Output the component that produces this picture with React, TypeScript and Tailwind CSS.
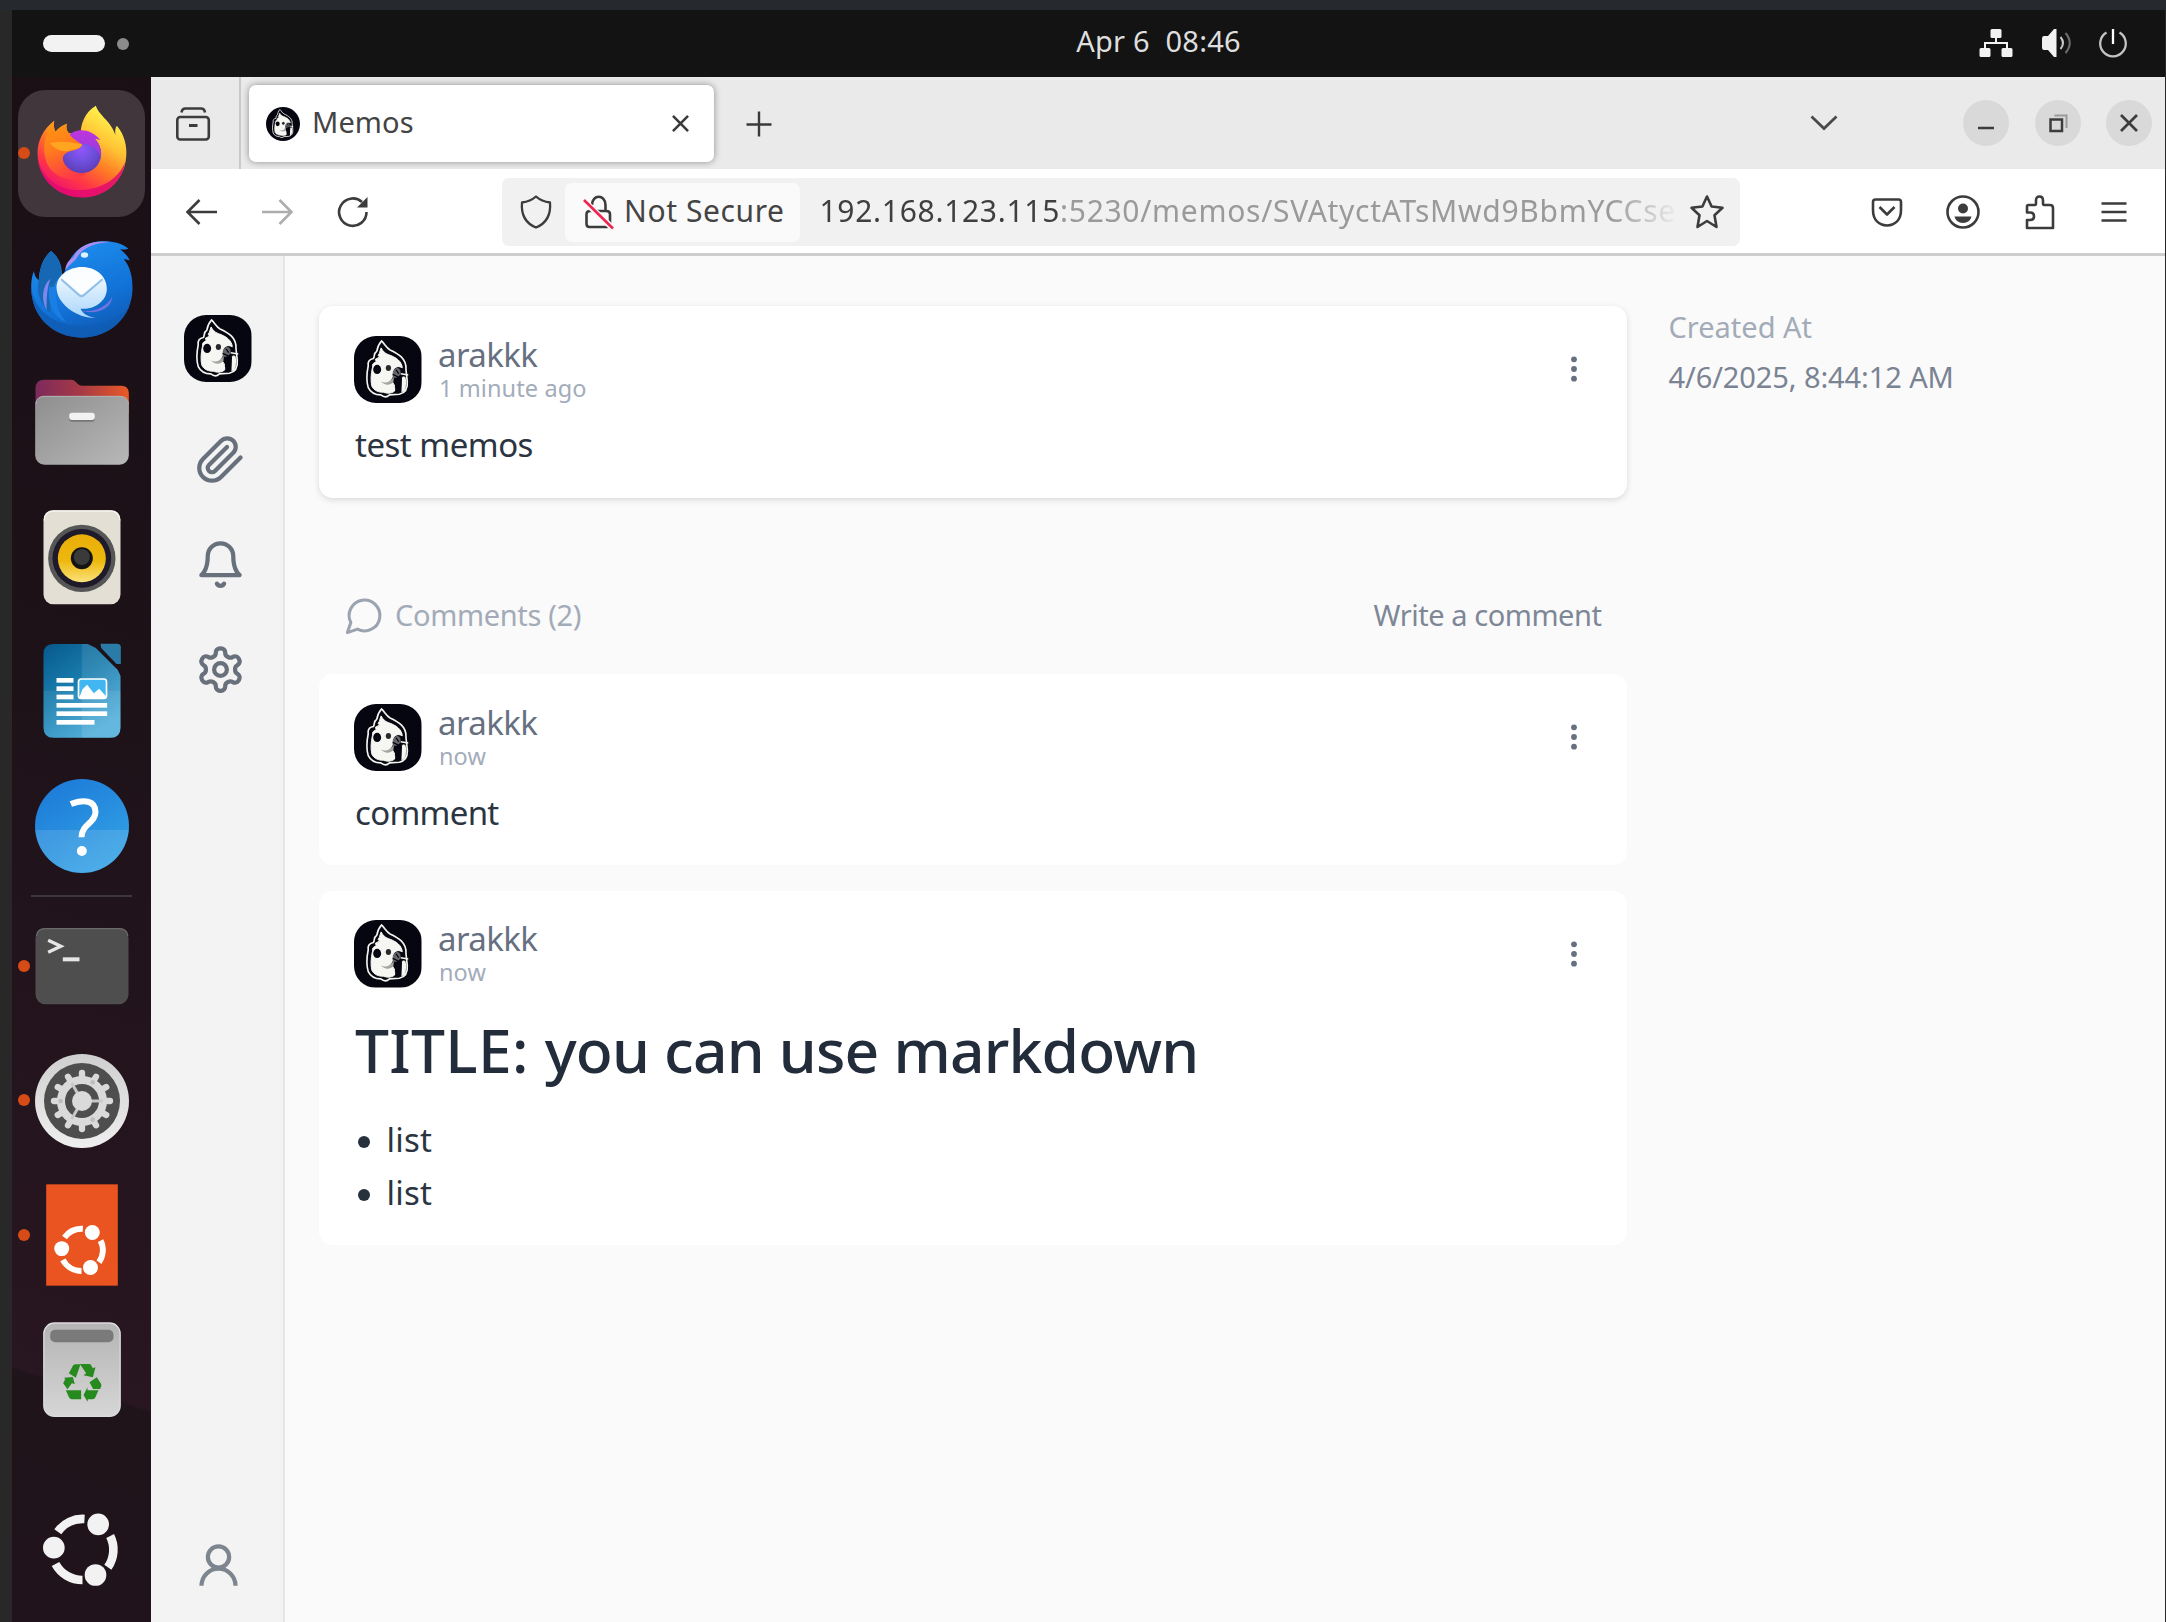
import type { ReactNode, SVGProps } from "react";

/* ---------- shared drawings ---------- */

function Avatar({ className }: { className: string }) {
  return (
    <svg className={className} viewBox="163 136 204 204">
      <rect x="163" y="136" width="204" height="204" fill="#060610" />
      <path
        d="M246 151 C236 163 233 174 232 182 C222 188 226 196 222 204 C210 206 204 214 206 226 C201 250 201 275 206 292 C214 308 228 314 244 314 C254 322 264 320 270 314 L300 312 C318 308 326 294 324 272 L322 256 L320 236 C322 205 298 190 272 178 C260 172 256 160 246 151Z"
        fill="#060610"
        stroke="#f4f4f0"
        strokeWidth="5"
        strokeLinejoin="round"
      />
      <path
        d="M245 172 C240 182 242 188 236 194 L240 200 L228 206 L230 214 C220 218 218 222 219 230 C214 252 213 272 217 288 C224 302 238 306 252 306 C268 312 280 308 288 300 C286 282 282 276 272 271 C282 262 278 250 282 238 C288 228 298 226 309 232 C307 212 290 200 266 192 C256 188 250 182 245 172Z"
        fill="#f6f6f2"
        stroke="#f6f6f2"
        strokeWidth="3"
        strokeLinejoin="round"
      />
      <path d="M244 272 C258 282 274 276 284 258 L282 276 C270 288 252 284 244 272Z" fill="#a5a5a3" />
      <path d="M308 262 C316 254 322 262 320 282 C319 298 314 306 306 305Z" fill="#f6f6f2" stroke="#f6f6f2" strokeWidth="2" />
      <path d="M286 270 L308 262 L306 306 L288 304Z" fill="#060610" />
      <ellipse cx="233" cy="237" rx="12" ry="14" fill="#060610" />
      <ellipse cx="267" cy="233" rx="8" ry="9" fill="#2a2a2e" />
      <path d="M284 238 C292 228 304 234 304 246 C302 258 292 264 282 262 C278 252 280 244 284 238Z" fill="#66666a" />
      <path d="M290 238 L298 250 M280 252 L298 260" stroke="#060610" strokeWidth="4" />
      <path d="M304 250 L327 254" stroke="#f4f4f0" strokeWidth="5" />
    </svg>
  );
}

function CircleOfFriends({ transform, color }: { transform?: string; color: string }) {
  return (
    <g transform={transform} fill={color}>
      <g fill="none" stroke={color} strokeWidth="26">
        <path d="M172 725 A92 92 0 0 1 252 687" />
        <path d="M329 738 A92 92 0 0 1 322 832" />
        <path d="M165 822 A92 92 0 0 0 246 870" />
      </g>
      <circle cx="160" cy="773" r="32.5" />
      <circle cx="293" cy="703" r="32.5" />
      <circle cx="285" cy="855" r="32.5" />
    </g>
  );
}

/* ---------- dock ---------- */

function DockItem({
  cy,
  running,
  active,
  children,
}: {
  cy: number;
  running?: boolean;
  active?: boolean;
  children: ReactNode;
}) {
  return (
    <div className="relative flex h-[134.5px] shrink-0 items-center justify-center">
      <div
        className={
          active
            ? "flex size-[127px] items-center justify-center rounded-[27px] bg-[#40363b]"
            : "flex size-[127px] items-center justify-center"
        }
      >
        <svg className="size-[108px]" viewBox={`82.5 ${cy - 162} 324 324`}>
          {children}
        </svg>
      </div>
      {running && <span className="absolute left-[6px] top-[61px] size-[12px] rounded-full bg-[#d64b16]" />}
    </div>
  );
}

function Firefox() {
  return (
    <>
      <defs>
        <linearGradient id="fxBody" x1="0.8" y1="0.1" x2="0.3" y2="0.95">
          <stop offset="0" stopColor="#fff14d" />
          <stop offset="0.3" stopColor="#ffc233" />
          <stop offset="0.55" stopColor="#ff7a24" />
          <stop offset="0.8" stopColor="#ff3647" />
          <stop offset="1" stopColor="#f0156b" />
        </linearGradient>
        <linearGradient id="fxFace" x1="0.2" y1="0" x2="0.5" y2="1">
          <stop offset="0" stopColor="#ff980e" />
          <stop offset="0.45" stopColor="#ff7d1c" />
          <stop offset="1" stopColor="#ff3b45" />
        </linearGradient>
        <radialGradient id="fxGlobe" cx="0.5" cy="0.4" r="0.65">
          <stop offset="0" stopColor="#9055fb" />
          <stop offset="0.5" stopColor="#6e4fdc" />
          <stop offset="1" stopColor="#5a3ab0" />
        </radialGradient>
        <linearGradient id="fxTop" x1="0" y1="0" x2="0" y2="1">
          <stop offset="0" stopColor="#c034dd" />
          <stop offset="1" stopColor="#8e3fe0" />
        </linearGradient>
      </defs>
      <path
        d="M240 175 C238 130 255 95 286 77 C296 108 330 120 345 165 C343 152 344 144 349 137 C372 163 380 200 377 230 C372 302 314 352 245 352 C170 352 111 294 111 219 C111 180 130 146 161 122 C159 138 161 148 165 155 C174 144 185 136 199 131 C196 142 198 152 205 160 C216 160 230 168 240 175Z"
        fill="url(#fxBody)"
      />
      <path
        d="M112 236 C128 300 180 334 246 330 C310 326 356 292 374 246 C364 312 308 352 245 352 C176 352 118 304 112 236Z"
        fill="#e30b72"
        opacity="0.85"
      />
      <circle cx="243" cy="221" r="59" fill="url(#fxGlobe)" />
      <path
        d="M200 172 C222 142 268 142 300 180 L284 176 C296 190 304 208 301 232 C290 200 262 190 240 192Z"
        fill="url(#fxTop)"
      />
      <path
        d="M161 122 C159 138 161 148 165 155 C174 144 185 136 199 131 C196 142 198 152 205 160 C214 176 232 184 245 194 C240 208 222 210 208 214 C192 220 184 228 188 244 C196 272 222 284 258 280 C230 310 170 300 146 262 C128 230 120 180 161 122Z"
        fill="url(#fxFace)"
      />
      <path d="M148 190 C170 182 206 184 245 193 C240 208 222 208 206 212 C186 218 164 208 148 190Z" fill="#ffa51f" />
    </>
  );
}

function Thunderbird() {
  return (
    <>
      <defs>
        <linearGradient id="tbBody" x1="0.3" y1="0" x2="0.7" y2="1">
          <stop offset="0" stopColor="#1e8ff0" />
          <stop offset="0.6" stopColor="#1272d8" />
          <stop offset="1" stopColor="#0f58b0" />
        </linearGradient>
        <linearGradient id="tbMail" x1="0" y1="0" x2="0" y2="1">
          <stop offset="0" stopColor="#ffffff" />
          <stop offset="1" stopColor="#a9d6fb" />
        </linearGradient>
      </defs>
      <path
        d="M100 574 C103 590 108 596 115 600 C117 562 130 530 152 513 C176 532 186 560 184 590 L200 560 C214 510 262 480 316 484 C344 485 366 492 384 506 C374 509 366 509 358 508 C372 518 382 528 388 542 C382 540 376 538 370 538 C390 562 396 592 396 625 C396 710 328 773 244 773 C158 773 92 710 92 622 C92 602 95 586 100 574Z"
        fill="url(#tbBody)"
      />
      <path d="M115 600 C117 562 130 530 152 513 C176 532 184 560 182 590 C160 600 148 640 150 700 C120 670 106 640 115 600Z" fill="#1668b4" />
      <path d="M92 622 C100 690 160 738 244 738 C310 738 360 716 388 676 C366 734 310 773 244 773 C158 773 92 710 92 622Z" fill="#0f5cb4" opacity="0.8" />
      <path d="M150 596 C124 616 122 660 138 690 C138 650 140 622 150 596Z" fill="#7f87ee" />
      <path d="M146 620 C140 670 160 710 196 726 C176 700 160 670 170 620Z" fill="#1a7fe4" />
      <path d="M194 572 C196 550 206 540 218 532 C232 498 276 478 330 486 C284 488 250 502 232 528 C226 544 208 550 194 572Z" fill="#a98df0" />
      <path d="M232 690 C276 700 316 684 336 650 C330 692 282 706 232 690Z" fill="#6f74e0" />
      <path
        d="M244 561 C286 561 319 588 319 626 C319 664 280 690 240 686 C246 700 262 710 286 714 C230 716 168 672 168 622 C168 588 204 561 244 561Z"
        fill="url(#tbMail)"
      />
      <path d="M182 598 L236 646 Q243 652 250 646 L306 598" fill="none" stroke="#8fbfe8" strokeWidth="6" />
      <path d="M184 594 L236 640 Q243 646 250 640 L304 594 C290 574 268 563 244 563 C220 563 198 574 184 594Z" fill="#fbfdff" />
      <ellipse cx="252" cy="525" rx="11" ry="8" fill="#dff0ff" />
    </>
  );
}

function Files() {
  return (
    <>
      <defs>
        <linearGradient id="flBack" x1="0" y1="0" x2="1" y2="0">
          <stop offset="0" stopColor="#7c2a5c" />
          <stop offset="0.5" stopColor="#a83a45" />
          <stop offset="1" stopColor="#e95a26" />
        </linearGradient>
        <linearGradient id="flFront" x1="0" y1="0" x2="1" y2="1">
          <stop offset="0" stopColor="#8e8e8e" />
          <stop offset="1" stopColor="#b8b8b8" />
        </linearGradient>
      </defs>
      <path d="M105 1000 V925 Q105 899 131 899 H212 Q220 899 226 906 L233 913 Q237 917 244 917 H362 Q385 917 385 940 V1000Z" fill="url(#flBack)" />
      <rect x="104" y="948" width="281" height="206" rx="28" fill="url(#flFront)" />
      <path d="M106 972 Q108 949 132 949 H358 Q382 949 384 972" fill="none" stroke="#b4b4b4" strokeWidth="3" />
      <rect x="206" y="1002" width="77" height="23" rx="9" fill="#777" />
      <rect x="206" y="998" width="77" height="22" rx="9" fill="#f2f2f2" />
    </>
  );
}

function Rhythmbox() {
  return (
    <>
      <defs>
        <linearGradient id="rbCone" x1="0" y1="0" x2="0" y2="1">
          <stop offset="0" stopColor="#e9ae08" />
          <stop offset="0.55" stopColor="#edb80e" />
          <stop offset="1" stopColor="#fbe27a" />
        </linearGradient>
      </defs>
      <rect x="129" y="88" width="231" height="282" rx="30" fill="#e3dfd4" />
      <path d="M131 118 Q132 90 160 90 H330 Q357 90 358 118" fill="none" stroke="#f6f4ee" strokeWidth="4" />
      <circle cx="244" cy="232" r="101" fill="#565656" />
      <circle cx="244" cy="232" r="88" fill="#1e1a2a" />
      <circle cx="244" cy="232" r="72" fill="url(#rbCone)" />
      <circle cx="244" cy="232" r="33" fill="#141414" />
      <circle cx="244" cy="228" r="24" fill="#3a3a3a" />
    </>
  );
}

function Writer() {
  return (
    <>
      <defs>
        <linearGradient id="wrBody" x1="0" y1="0" x2="0.6" y2="1">
          <stop offset="0" stopColor="#07598c" />
          <stop offset="0.5" stopColor="#1a7eae" />
          <stop offset="1" stopColor="#45a9d8" />
        </linearGradient>
      </defs>
      <path d="M159 492 H262 L286 504 L352 570 L360 588 V743 Q360 773 330 773 H159 Q129 773 129 743 V522 Q129 492 159 492Z" fill="url(#wrBody)" />
      <path d="M244 492 H262 L286 504 L352 570 L360 588 V743 Q360 773 330 773 H244Z" fill="#fff" opacity="0.1" />
      <path d="M129 632 H360 V743 Q360 773 330 773 H159 Q129 773 129 743Z" fill="#fff" opacity="0.08" />
      <path d="M300 491 H350 Q361 491 361 502 V552 H348 L302 504Z" fill="#2a7ba8" />
      <g fill="#fff">
        <rect x="168" y="594" width="51" height="14" />
        <rect x="168" y="619" width="51" height="14" />
        <rect x="168" y="644" width="51" height="14" />
        <rect x="168" y="669" width="152" height="14" />
        <rect x="168" y="694" width="152" height="14" />
        <rect x="168" y="720" width="114" height="14" />
      </g>
      <rect x="234" y="597" width="84" height="58" rx="8" fill="#42b6f0" stroke="#fff" strokeWidth="5" />
      <path d="M236 654 L246 628 L260 614 L280 640 L296 626 L316 648 V654Z" fill="#fff" />
    </>
  );
}

function Help() {
  return (
    <>
      <defs>
        <linearGradient id="hpTop" x1="0.2" y1="0" x2="0.8" y2="1">
          <stop offset="0" stopColor="#1c7ad8" />
          <stop offset="1" stopColor="#35a5e6" />
        </linearGradient>
      </defs>
      <circle cx="244.5" cy="1036" r="141" fill="url(#hpTop)" />
      <path d="M104 1048 H385 A141 141 0 0 1 104 1048Z" fill="#fff" opacity="0.12" />
      <path d="M211 970 C250 954 285 960 285 994 C285 1028 243 1030 243 1070" fill="none" stroke="#fff" strokeWidth="18" />
      <circle cx="244" cy="1111" r="15" fill="#fff" />
    </>
  );
}

function Terminal() {
  return (
    <>
      <rect x="105" y="144" width="279" height="229" rx="30" fill="#4e4e4e" />
      <path d="M108 168 Q110 146 134 146 H356 Q380 146 382 168" fill="none" stroke="#6a6a6a" strokeWidth="4" />
      <path d="M143 181 L181 199 L143 217" fill="none" stroke="#e6e6e6" strokeWidth="10" />
      <rect x="187" y="232" width="50" height="12" fill="#e6e6e6" />
    </>
  );
}

const TEETH = [0, 30, 60, 90, 120, 150, 180, 210, 240, 270, 300, 330];

function SettingsApp() {
  return (
    <>
      <defs>
        <linearGradient id="stRim" x1="0" y1="0" x2="0" y2="1">
          <stop offset="0" stopColor="#cfcfcf" />
          <stop offset="1" stopColor="#efefef" />
        </linearGradient>
      </defs>
      <circle cx="244.5" cy="662" r="141" fill="url(#stRim)" />
      <circle cx="244.5" cy="662" r="114" fill="#4e4e4e" />
      <g transform="translate(244.5 662)" stroke="#dadada" fill="none">
        {TEETH.map((a) => (
          <path key={a} d="M64 0 H84" strokeWidth="19" strokeLinecap="round" transform={`rotate(${a})`} />
        ))}
        <circle r="63" strokeWidth="24" />
        <g strokeWidth="9" stroke="#c8c8c8">
          <path d="M20 0 H62" />
          <path d="M20 0 H62" transform="rotate(120)" />
          <path d="M20 0 H62" transform="rotate(240)" />
        </g>
        <circle r="30" fill="#dadada" stroke="none" />
        <g fill="#bdbdbd" stroke="none">
          <circle cx="-64" r="7" />
          <circle cx="32" cy="-56" r="7" />
          <circle cx="32" cy="56" r="7" />
        </g>
      </g>
    </>
  );
}

function Trash() {
  return (
    <>
      <defs>
        <linearGradient id="trBody" x1="0" y1="0" x2="0" y2="1">
          <stop offset="0" stopColor="#b4b4b4" />
          <stop offset="1" stopColor="#d6d6d6" />
        </linearGradient>
      </defs>
      <rect x="130" y="99" width="229" height="280" rx="32" fill="url(#trBody)" stroke="#dcdcdc" strokeWidth="4" />
      <rect x="149" y="119" width="190" height="38" rx="15" fill="#7a7a7a" />
      <g fill="#278a1e">
        <path d="M205 250 L218 226 Q221 223 226 223 H240 L226 263Z" />
        <path d="M238 222 H266 Q270 222 272 226 L277 235 L285 232 L277 262 L249 256 L257 250Z" />
        <path d="M191 263 L217 261 L223 282 L214 280 L201 298 L188 280 L194 268Z" />
        <path d="M196 301 H242 V328 H214 Q208 328 205 321Z" />
        <path d="M249 315 L261 292 V301 H294 L284 323 Q281 328 275 328 H262 L261 335Z" />
        <path d="M267 277 L289 262 L302 282 Q305 289 299 297 H278Z" />
      </g>
    </>
  );
}

function Dock() {
  return (
    <nav className="flex w-[139px] shrink-0 flex-col bg-[linear-gradient(197.5deg,#190f15_0%,#1e1219_40%,#281620_83.9%,#20141b_84.1%,#20131b_100%)] pt-[8.75px]">
      <DockItem cy={219} running active>
        <Firefox />
      </DockItem>
      <DockItem cy={624}>
        <Thunderbird />
      </DockItem>
      <DockItem cy={1026}>
        <Files />
      </DockItem>
      <DockItem cy={228}>
        <Rhythmbox />
      </DockItem>
      <DockItem cy={633}>
        <Writer />
      </DockItem>
      <DockItem cy={1036}>
        <Help />
      </DockItem>
      <div className="flex h-[6px] shrink-0 items-center justify-center">
        <div className="h-[2px] w-[101px] bg-[#3d373b]" />
      </div>
      <DockItem cy={258} running>
        <Terminal />
      </DockItem>
      <DockItem cy={662} running>
        <SettingsApp />
      </DockItem>
      <DockItem cy={1065} running>
        <rect x="137" y="913" width="215" height="304" fill="#e95420" />
        <CircleOfFriends color="#fff" transform="translate(243 1110) scale(0.69) translate(-246 -779)" />
      </DockItem>
      <DockItem cy={240}>
        <Trash />
      </DockItem>
      <div className="mt-auto pb-[5px]">
        <DockItem cy={780}>
          <CircleOfFriends color="#f2f2f2" />
        </DockItem>
      </div>
    </nav>
  );
}

/* ---------- desktop top bar ---------- */

function TopBar() {
  return (
    <header className="grid h-[67px] shrink-0 grid-cols-[1fr_auto_1fr] items-center bg-[#131313]">
      <div className="flex items-center gap-[12px] pl-[31px]">
        <span className="h-[17px] w-[62px] rounded-full bg-[#f2f2f2]" />
        <span className="size-[12px] rounded-full bg-[#8b8b8b]" />
      </div>
      <div className="-mt-[6px] ml-[140px] whitespace-pre text-[29px] leading-none tracking-[0.25px] text-[#dedede]">Apr 6  08:46</div>
      <div className="-mt-px flex items-center justify-end pr-[37px] text-[#f2f2f2]">
        <svg className="h-[30px] w-[34px]" viewBox="0 0 34 30" fill="currentColor">
          <rect x="11.5" y="1" width="11" height="9" rx="1.5" />
          <rect x="0.5" y="20" width="11" height="9" rx="1.5" />
          <rect x="22.5" y="20" width="11" height="9" rx="1.5" />
          <path d="M17 8 V15 M6 22 V15 H28 V22" fill="none" stroke="currentColor" strokeWidth="2" />
        </svg>
        <svg className="ml-[28px] h-[30px] w-[32px]" viewBox="0 0 32 30" fill="currentColor">
          <path d="M1 11 Q1 8 3 8 H7 L13 1 H15.500 V29 H13 L7 22 H3 Q1 22 1 19Z" />
          <path d="M19.500 9 Q24.500 15 19.500 21" fill="none" stroke="#c8c8c8" strokeWidth="2" />
          <path d="M24.500 5 Q33 15 24.500 25" fill="none" stroke="#6e6e6e" strokeWidth="2" />
        </svg>
        <svg className="ml-[25px] h-[30px] w-[30px]" viewBox="0 0 30 30" fill="none" stroke="#c4c4c4" strokeWidth="2.3">
          <path d="M15 1 V16" stroke="#fff" />
          <path d="M8.500 4.500 A12.800 12.800 0 1 0 21.500 4.500" />
        </svg>
      </div>
    </header>
  );
}

/* ---------- browser ---------- */

function Glyph(props: SVGProps<SVGSVGElement>) {
  return <svg viewBox="0 0 36 36" fill="none" stroke="#3c3c3c" strokeWidth="2.6" {...props} />;
}

function TabStrip() {
  return (
    <div className="flex h-[92px] shrink-0 bg-[#eaeaea]">
      <div className="flex w-[90px] items-center border-r-2 border-[#c9c9c9] pl-[24px]">
        <Glyph className="size-[36px]" strokeLinejoin="round">
          <rect x="2.300" y="12" width="31.500" height="22.500" rx="3" />
          <path d="M6.500 7.500 Q7 3.500 10.500 3.500 H26 Q29.500 3.500 30 7.500" />
          <path d="M14 20.500 H22.500" strokeWidth="3" />
        </Glyph>
      </div>
      <div className="ml-[8px] mt-[8px] flex h-[77px] w-[465px] items-center rounded-[7px] bg-white pl-[17px] pr-[25px] shadow-[0_0_7px_rgba(0,0,0,0.4)]">
        <Avatar className="size-[34px] rounded-full" />
        <span className="relative -top-[2px] ml-[12px] text-[29px] leading-none tracking-[0.1px] text-[#444]">Memos</span>
        <svg className="ml-auto size-[17px]" viewBox="0 0 18 18" stroke="#3a3a3a" strokeWidth="2.700">
          <path d="M1 1 L17 17 M17 1 L1 17" />
        </svg>
      </div>
      <div className="flex flex-1 items-center pr-[13px]">
        <svg className="ml-[32px] mt-[2px] size-[26px]" viewBox="0 0 26 26" stroke="#3a3a3a" strokeWidth="2.400">
          <path d="M13 0.500 V25.500 M0.500 13.500 H25.500" />
        </svg>
        <svg className="ml-auto h-[16px] w-[28px]" viewBox="0 0 28 16" fill="none" stroke="#4a4a4a" strokeWidth="2.800">
          <path d="M1.500 1.500 L14 13.500 L26.500 1.500" />
        </svg>
        <div className="ml-[125px] flex gap-[25.500px]">
          <WindowButton>
            <path d="M15 28 H31" strokeWidth="2.500" />
          </WindowButton>
          <WindowButton>
            <path d="M19.500 15.500 H31.500 V28" stroke="#9a9a9a" strokeWidth="2" />
            <rect x="15.500" y="19.500" width="11.500" height="11.500" strokeWidth="2.500" />
          </WindowButton>
          <WindowButton>
            <path d="M15 15 L31 31 M31 15 L15 31" strokeWidth="2.700" />
          </WindowButton>
        </div>
      </div>
    </div>
  );
}

function WindowButton({ children }: { children: ReactNode }) {
  return (
    <svg className="size-[46px] rounded-full bg-[#d9d9d9]" viewBox="0 0 46 46" fill="none" stroke="#3c3c3c">
      {children}
    </svg>
  );
}

function Toolbar() {
  return (
    <div className="flex h-[87px] shrink-0 items-center border-b-[3px] border-[#cecece] bg-white pt-[2px]">
      <Glyph className="ml-[33px] size-[36px]">
        <path d="M33 18 H4 M15.500 6 L3.500 18 L15.500 30" />
      </Glyph>
      <Glyph className="ml-[39px] size-[36px]" stroke="#adadad">
        <path d="M3 18 H32 M20.500 6 L32.500 18 L20.500 30" />
      </Glyph>
      <Glyph className="ml-[40px] size-[36px]">
        <path d="M31.500 18 A13.700 13.700 0 1 1 27 8" />
        <path d="M32.500 3 V13.500 H22Z" fill="#3c3c3c" stroke="none" />
      </Glyph>
      <div className="ml-[131px] flex h-[67.5px] w-[1238px] items-center rounded-[7px] bg-[#f1f1f1]">
        <Glyph className="ml-[16px] size-[36px]" strokeWidth="2.300" strokeLinejoin="round">
          <path d="M18 2.500 C22 6 28 8 32 8.500 C33 20 29 29 18 33.500 C7 29 3 20 4 8.500 C8 8 14 6 18 2.500Z" />
        </Glyph>
        <div className="ml-[11px] flex h-[59px] w-[235px] items-center rounded-[7px] bg-[#fafafa] pl-[17px]">
          <Glyph className="size-[36px]" strokeLinejoin="round">
            <path d="M4.500 20 Q4.500 17 8 17 H24 Q28 17 28 20 V30 Q28 33 25 33 H7.500 Q4.500 33 4.500 30Z" />
            <path d="M10 11 C10 0 23.500 0 23.500 11 V17" />
            <path d="M1 6 L31 34.500" stroke="#fafafa" strokeWidth="6" />
            <path d="M2 6 L31 34.500" stroke="#f0254f" strokeWidth="2.600" />
          </Glyph>
          <span className="relative -top-px ml-[6px] whitespace-nowrap text-[30px] leading-none tracking-[0.6px] text-[#444]">Not Secure</span>
        </div>
        <div className="relative -top-px ml-[19.5px] w-[860px] overflow-hidden whitespace-nowrap py-1 text-[30px] leading-[40px] tracking-[0.7px] text-[#9a9a9a] [mask-image:linear-gradient(to_right,black_92%,transparent_100%)]">
          <span className="text-[#3f3f3f]">192.168.123.115</span>:5230/memos/SVAtyctATsMwd9BbmYCCse
        </div>
        <Glyph className="ml-[9px] size-[36px] shrink-0" strokeLinejoin="round">
          <path d="M18 2.500 L22.600 12.500 L33.500 13.800 L25.500 21.300 L27.500 33 L18 27 L8.500 33 L10.500 21.300 L2.500 13.800 L13.400 12.500Z" />
        </Glyph>
      </div>
      <Glyph className="ml-[129px] size-[36px]" strokeLinejoin="round">
        <path d="M4 8 Q4 5.500 6.500 5.500 H29.500 Q32 5.500 32 8 V16 C32 26 26 31 18 31.500 C10 31 4 26 4 16Z" />
        <path d="M10.500 13 L18 20.500 L25.500 13" />
      </Glyph>
      <Glyph className="ml-[40px] size-[36px]">
        <circle cx="18" cy="18" r="15.500" />
        <circle cx="18" cy="14.500" r="5" fill="#3c3c3c" stroke="none" />
        <path d="M9.500 22.500 H26.500 Q25 29 18 29 Q11 29 9.500 22.500Z" fill="#3c3c3c" stroke="none" />
      </Glyph>
      <Glyph className="ml-[41px] size-[36px]" strokeLinejoin="round">
        <path d="M5 34 V26 H8 Q12 26 12 22.300 Q12 18.500 8 18.500 H5 V12.500 Q5 11 6.500 11 H13 Q14 11 14 9 V6.500 Q14 2.500 17.500 2.500 Q21 2.500 21 6.500 V9 Q21 11 22 11 H28 Q31 11 31 14 V34Z" />
      </Glyph>
      <Glyph className="ml-[38px] size-[36px]">
        <path d="M5.500 9.500 H30.500 M5.500 18 H30.500 M5.500 26.500 H30.500" />
      </Glyph>
    </div>
  );
}

/* ---------- memos page ---------- */

function LineIcon({ className, children, strokeWidth = 2 }: { className: string; children: ReactNode; strokeWidth?: number }) {
  return (
    <svg className={className} viewBox="0 0 24 24" fill="none" stroke="currentColor" strokeWidth={strokeWidth} strokeLinejoin="round" strokeLinecap="butt">
      {children}
    </svg>
  );
}

function SideNav() {
  return (
    <aside className="flex w-[134px] shrink-0 flex-col items-center border-r-2 border-[#e4e5e9] bg-[#f3f3f3] pb-[31.500px] pl-[2px] pt-[58.500px] text-[#68707c]">
      <Avatar className="h-[67.500px] w-[67.500px] rounded-[22px]" />
      <div className="ml-[4px] mt-[52px] flex flex-col gap-[54px]">
        <LineIcon className="size-[51px]">
          <path strokeLinecap="round" d="m21.440 11.050-9.190 9.190a6 6 0 0 1-8.490-8.490l8.570-8.570A4 4 0 1 1 18 8.840l-8.590 8.570a2 2 0 0 1-2.830-2.830l8.490-8.480" />
        </LineIcon>
        <LineIcon className="size-[51px]">
          <path strokeLinecap="round" d="M6 8a6 6 0 0 1 12 0c0 7 3 9 3 9H3s3-2 3-9" />
          <path d="M10.300 21a1.940 1.940 0 0 0 3.400 0" strokeLinecap="round" />
        </LineIcon>
        <LineIcon className="size-[51px]">
          <path d="M12.220 2h-.44a2 2 0 0 0-2 2v.18a2 2 0 0 1-1 1.730l-.43.25a2 2 0 0 1-2 0l-.15-.08a2 2 0 0 0-2.730.73l-.22.38a2 2 0 0 0 .73 2.730l.15.1a2 2 0 0 1 1 1.720v.51a2 2 0 0 1-1 1.740l-.15.09a2 2 0 0 0-.73 2.730l.22.38a2 2 0 0 0 2.730.73l.15-.08a2 2 0 0 1 2 0l.43.25a2 2 0 0 1 1 1.730V20a2 2 0 0 0 2 2h.44a2 2 0 0 0 2-2v-.18a2 2 0 0 1 1-1.730l.43-.25a2 2 0 0 1 2 0l.15.08a2 2 0 0 0 2.730-.73l.22-.39a2 2 0 0 0-.73-2.730l-.15-.08a2 2 0 0 1-1-1.740v-.5a2 2 0 0 1 1-1.740l.15-.09a2 2 0 0 0 .73-2.730l-.22-.38a2 2 0 0 0-2.730-.73l-.15.08a2 2 0 0 1-2 0l-.43-.25a2 2 0 0 1-1-1.730V4a2 2 0 0 0-2-2z" />
          <circle cx="12" cy="12" r="3" />
        </LineIcon>
      </div>
      <LineIcon className="mt-auto size-[51px] text-[#7d858f]">
        <circle cx="12" cy="8" r="5" />
        <path d="M20 21.500a8 8 0 0 0-16 0" />
      </LineIcon>
    </aside>
  );
}

function MemoCard({ time, className, children }: { time: string; className: string; children: ReactNode }) {
  return (
    <article className={`rounded-[14px] bg-white px-[35px] pt-[29.500px] ${className}`}>
      <div className="flex h-[68px]">
        <Avatar className="h-[67.500px] w-[67.500px] rounded-[22px]" />
        <div className="ml-[16.500px] pt-[2px]">
          <div className="text-[33px] leading-[33px] tracking-[-0.6px] text-[#667080]">arakkk</div>
          <div className="ml-px mt-[6px] text-[23.500px] leading-[23.500px] tracking-[0.1px] text-[#a3acba]">{time}</div>
        </div>
        <svg className="ml-auto mr-[15px] mt-[19.500px] h-[28px] w-[6px]" viewBox="0 0 6 28" fill="#667080">
          <circle cx="3" cy="4.300" r="2.900" />
          <circle cx="3" cy="14" r="2.900" />
          <circle cx="3" cy="23.700" r="2.900" />
        </svg>
      </div>
      <div className="pl-px">{children}</div>
    </article>
  );
}

function ListItem({ children }: { children: ReactNode }) {
  return (
    <li className="flex h-[53px] items-center">
      <span className="ml-[3px] mt-[5px] size-[12px] rounded-full bg-[#27303d]" />
      <span className="ml-[16.500px] text-[33px] leading-[53px] tracking-[0.2px]">{children}</span>
    </li>
  );
}

function MemoPage() {
  return (
    <div className="flex min-h-0 flex-1 bg-[#fafafa]">
      <SideNav />
      <main className="ml-[34px] mt-[50px] w-[1307.500px] text-[#2b3441]">
        <MemoCard time="1 minute ago" className="h-[191.500px] shadow-[0_2px_6px_rgba(0,0,0,0.13)]">
          <p className="mt-[21.500px] text-[33px] leading-[40px] tracking-[-0.5px]">test memos</p>
        </MemoCard>
        <div className="mt-[96.500px] flex h-[42px] items-center pl-[25px] pr-[25px] text-[29px] leading-none">
          <LineIcon className="size-[41px] text-[#9ca3b0]" strokeWidth={1.8}>
            <path d="M7.900 20A9 9 0 1 0 4 16.100L2 22Z" />
          </LineIcon>
          <span className="relative -top-px ml-[10px] tracking-[-0.350px] text-[#a3abb8]">Comments (2)</span>
          <span className="relative -top-px ml-auto tracking-[-0.45px] text-[#7e8796]">Write a comment</span>
        </div>
        <MemoCard time="now" className="mt-[38px] h-[191px]">
          <p className="mt-[21.500px] text-[33px] leading-[40px] tracking-[-0.7px]">comment</p>
        </MemoCard>
        <MemoCard time="now" className="mt-[25.500px] h-[354.500px]">
          <h1 className="mt-[26.500px] whitespace-nowrap text-[60.500px] font-medium leading-[70px] tracking-[-0.8px] text-[#222c3a]">
            <span className="tracking-[0.3px]">TITLE: </span>you can use markdown
          </h1>
          <ul className="mt-[28.500px]">
            <ListItem>list</ListItem>
            <ListItem>list</ListItem>
          </ul>
        </MemoCard>
      </main>
      <section className="ml-[42px] mt-[50px] whitespace-nowrap text-[29px] leading-[50.500px]">
        <div className="-mt-[4.500px] text-[#a3abb8]">Created At</div>
        <div className="tracking-[-0.1px] text-[#7a8393]">4/6/2025, 8:44:12 AM</div>
      </section>
    </div>
  );
}

export default function App() {
  return (
    <div className="h-[1622px] w-[2166px] overflow-hidden bg-[#282828] font-['Noto_Sans','Open_Sans',sans-serif]">
      <div className="h-[10px] bg-[#262a2e]" />
      <div className="ml-[12px] mr-px flex h-[1612px] flex-col">
        <TopBar />
        <div className="flex min-h-0 flex-1">
          <Dock />
          <div className="flex min-w-0 flex-1 flex-col">
            <TabStrip />
            <Toolbar />
            <MemoPage />
          </div>
        </div>
      </div>
    </div>
  );
}
